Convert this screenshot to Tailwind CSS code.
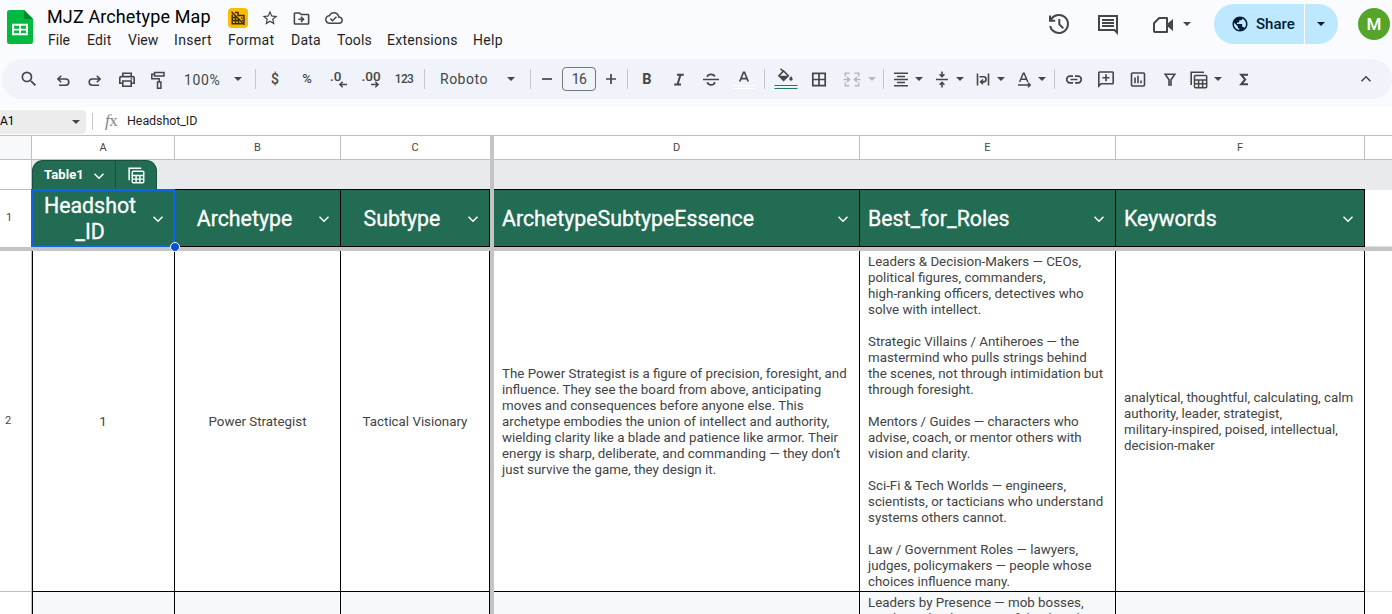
<!DOCTYPE html>
<html lang="en">
<head>
<meta charset="utf-8">
<title>MJZ Archetype Map</title>
<script src="https://cdn.jsdelivr.net/npm/@tailwindcss/browser@4"></script>
</head>
<body class="w-[1392px] h-[614px] overflow-hidden bg-white font-[Roboto,sans-serif] whitespace-nowrap">
<svg class="hidden">
  <symbol id="caret" viewBox="0 0 8 4"><path d="M0 0h8L4 4z"/></symbol>
  <symbol id="chev" viewBox="0 0 12 8"><path d="M1.500 1.700 6 6.200l4.500-4.500" fill="none" stroke="currentColor" stroke-width="1.500"/></symbol>
  <symbol id="tablecalc" viewBox="0 0 18 18"><path d="M1.200 14V1.200H14" fill="none" stroke="currentColor" stroke-width="1.600"/><path d="M4.500 5.500a1 1 0 0 1 1-1h10.200a1 1 0 0 1 1 1v10.200a1 1 0 0 1-1 1H5.500a1 1 0 0 1-1-1zM4.500 9h12.200M4.500 12.800h12.200M8.600 9v7.500M12.600 9v7.500" fill="none" stroke="currentColor" stroke-width="1.500"/></symbol>
</svg>
<div class="flex flex-col w-full h-full">
  <div class="bg-[#f9fbff] h-[107px] shrink-0">
    <header class="h-[59px] flex text-[#444746]">
      <svg class="w-[26px] h-[34px] ml-[7px] mt-[10px]" viewBox="0 0 26 34"><path d="M2.500 0H17l9 9v22.500a2.500 2.500 0 0 1-2.500 2.500h-21A2.500 2.500 0 0 1 0 31.500v-29A2.500 2.500 0 0 1 2.500 0z" fill="#00ba3f"/><path d="M17 0l9 9h-7.500A1.500 1.500 0 0 1 17 7.500z" fill="#008a2b"/><path d="M5 13.700h16v11.600H5zM7 15.700v3h5v-3zM14 15.700v3h5v-3zM7 20.500v2.800h5v-2.800zM14 20.500v2.800h5v-2.800z" fill="#fff" fill-rule="evenodd"/></svg>
      <div class="ml-[14px] flex flex-col">
        <div class="flex items-center h-[31px] pt-[5px]">
          <div class="w-[181px] text-[18px] leading-[24px] tracking-[0.12px] text-black pb-[3px]">MJZ Archetype Map</div>
          <div class="w-5 h-5 rounded bg-[#fbbc04] grid place-items-center"><svg class="w-4 h-4" viewBox="0 0 16 16" fill="none" stroke="#3c2e0a" stroke-width="1.500"><path d="M5 2.500h3v3h6v8M2.200 4.500v9.300h10.500M5.500 6v7.500M8.500 8.500v5M2.500 7.500h4M2.500 10.500h7M11 8.200h1.500M12 10.500h1"/><path d="M1.500 1.800l13 13"/></svg></div>
          <svg class="w-[18px] h-[18px] ml-[13px]" viewBox="0 0 24 24" fill="currentColor"><path d="M22 9.240l-7.190-.620L12 2 9.190 8.630 2 9.240l5.460 4.730L5.820 21 12 17.270 18.180 21l-1.630-7.030L22 9.240zM12 15.400l-3.760 2.270 1-4.280-3.320-2.880 4.380-.380L12 6.100l1.710 4.040 4.380.380-3.320 2.880 1 4.280L12 15.400z"/></svg>
          <svg class="w-[19px] h-[19px] ml-[13px]" viewBox="0 0 24 24" fill="currentColor"><path d="M20 6h-8l-2-2H4c-1.100 0-2 .9-2 2v12c0 1.100.9 2 2 2h16c1.100 0 2-.9 2-2V8c0-1.100-.9-2-2-2zm0 12H4V6h5.170l2 2H20v10zm-7.840-6H8v2h4.160l-1.590 1.590L11.990 17 16 13.010 11.990 9l-1.410 1.410L12.160 12z"/></svg>
          <svg class="w-[18px] h-[18px] ml-[14px]" viewBox="0 0 24 24" fill="currentColor"><path d="M19.350 10.040C18.670 6.590 15.640 4 12 4 9.110 4 6.600 5.640 5.350 8.040 2.340 8.360 0 10.910 0 14c0 3.310 2.690 6 6 6h13c2.760 0 5-2.240 5-5 0-2.640-2.050-4.780-4.650-4.960zM19 18H6c-2.210 0-4-1.790-4-4 0-2.050 1.530-3.760 3.560-3.970l1.070-.110.500-.950C8.080 7.140 9.940 6 12 6c2.620 0 4.880 1.860 5.390 4.430l.300 1.500 1.530.110c1.560.100 2.780 1.410 2.780 2.960 0 1.650-1.350 3-3 3zm-9-3.820l-2.090-2.090L6.500 13.500 10 17l6.010-6.010-1.410-1.410z"/></svg>
        </div>
        <nav class="flex h-[18px] items-center text-[14px] text-[#1f1f1f] pl-px">
          <span class="w-[39px]">File</span><span class="w-[41px] tracking-[0.2px]">Edit</span><span class="w-[46px]">View</span><span class="w-[54px] tracking-[0.35px]">Insert</span><span class="w-[63px] tracking-[0.25px]">Format</span><span class="w-[46px] tracking-[0.2px]">Data</span><span class="w-[50px] tracking-[0.1px]">Tools</span><span class="w-[86px] tracking-[0.25px]">Extensions</span><span class="tracking-[0.3px]">Help</span>
        </nav>
      </div>
      <div class="ml-auto flex h-[48px] items-center">
        <svg class="w-6 h-6 mr-[25px]" viewBox="0 0 24 24" fill="none" stroke="currentColor" stroke-width="2"><path d="M3 3.500v5.200h5.200M3.600 8.600A9 9 0 1 1 3.200 14M12.300 7v5.400l4 3.800"/></svg>
        <svg class="w-6 h-6 mr-[31px] mt-[2px]" viewBox="0 0 24 24" fill="none" stroke="currentColor" stroke-width="2"><path d="M3 3h18v16.500l-2.500-2.500H3z"/><path d="M18 17l4 4.500V17z" fill="currentColor" stroke="none"/><path d="M6 7h12M6 10h12M6 13h12"/></svg>
        <svg class="w-6 h-6 mt-[2px]" viewBox="0 0 24 24" fill="none" stroke="currentColor" stroke-width="2"><path d="M8.200 5H16v14H4a1 1 0 0 1-1-1v-7.800z" stroke-linejoin="round"/><path d="M16 11l6-5v12l-6-5z" fill="currentColor" stroke="none"/></svg>
        <svg class="w-[8px] h-[4px] ml-[8px] mr-[23px]" fill="#444746"><use href="#caret"/></svg>
        <div class="flex h-10 rounded-full bg-[#bde8ff] text-[#001d35] overflow-hidden w-[124px] mr-5">
          <div class="w-[91px] flex items-center pl-[17px] border-r border-white text-[15px] font-medium">
            <svg class="w-[18px] h-[18px] mr-[7px]" viewBox="0 0 24 24" fill="currentColor"><path d="M12 2C6.480 2 2 6.480 2 12s4.480 10 10 10 10-4.480 10-10S17.520 2 12 2zm-1 17.930c-3.950-.490-7-3.850-7-7.930 0-.620.080-1.210.210-1.790L9 15v1c0 1.100.9 2 2 2v1.930zm6.900-2.540c-.260-.810-1-1.390-1.900-1.390h-1v-3c0-.550-.450-1-1-1H8v-2h2c.550 0 1-.450 1-1V7h2c1.100 0 2-.9 2-2v-.410c2.930 1.190 5 4.060 5 7.410 0 2.080-.800 3.970-2.100 5.390z"/></svg>Share
          </div>
          <div class="flex-1 flex items-center pl-[12px]"><svg class="w-[8px] h-[4px]" fill="currentColor"><use href="#caret"/></svg></div>
        </div>
        <div class="w-8 h-8 rounded-full bg-[#54a529] text-white text-[17px] font-medium grid place-items-center mr-[2px] pt-px">M</div>
      </div>
    </header>

    <div class="ml-[2px] h-10 rounded-full bg-[#f0f3fa] flex items-center pl-[11px] text-[#444746] text-[14px]">
      <svg class="w-5 h-5 mx-[6px]" viewBox="0 0 24 24" fill="currentColor"><path d="M15.500 14h-.790l-.280-.270A6.471 6.471 0 0 0 16 9.500 6.500 6.500 0 1 0 9.500 16c1.610 0 3.090-.590 4.230-1.570l.270.280v.790l5 4.990L20.490 19l-4.990-5zm-6 0C7.010 14 5 11.990 5 9.500S7.010 5 9.500 5 14 7.010 14 9.500 11.990 14 9.500 14z"/></svg>
      <svg class="w-6 h-6 ml-[6px]" viewBox="0 0 24 24" fill="none" stroke="currentColor" stroke-width="1.600"><path d="M10.200 8.700 6.900 12l3.300 3.300M7 12h7.700a3.100 3.100 0 0 1 0 6.200H8"/></svg>
      <svg class="w-6 h-6 ml-2" viewBox="0 0 24 24" fill="none" stroke="currentColor" stroke-width="1.600"><path d="M13.800 8.700l3.300 3.300-3.300 3.300M17 12H9.300a3.100 3.100 0 0 0 0 6.200H16"/></svg>
      <svg class="w-6 h-6 ml-2" viewBox="0 0 24 24" fill="none" stroke="currentColor" stroke-width="1.600"><path d="M7.800 9.500V6.200h8.400v3.300M7.500 16.200H4.800v-5.200a1.400 1.400 0 0 1 1.400-1.400h11.600a1.400 1.400 0 0 1 1.400 1.400v5.200h-2.700M7.800 14h8.400v5.200H7.800z"/><path d="M15.600 11.200h1.600v1.500h-1.600z" fill="currentColor" stroke="none"/></svg>
      <svg class="w-6 h-6 ml-[7px]" viewBox="0 0 24 24" fill="none" stroke="currentColor" stroke-width="1.500"><path d="M8.500 5.500H18V9H8.500zM8.500 7.200H5.800v4.600h7.400V15M11.500 15h3.400v6.200h-3.400z"/></svg>
      <span class="ml-[14px] w-[42px] tracking-[0.6px] pt-[2px]">100%</span>
      <svg class="w-2 h-1 mx-2" fill="currentColor"><use href="#caret"/></svg>
      <i class="w-px h-5 bg-[#c7c7c7] ml-[5px]"></i>
      <span class="ml-[3px] w-8 text-center font-medium">$</span>
      <span class="w-8 text-center text-[13px] font-medium">%</span>
      <span class="w-8 flex justify-center"><svg class="w-6 h-6" viewBox="0 0 24 24"><text x="3" y="13.500" class="text-[13.500px] font-medium" fill="currentColor">.0</text><path d="M20 17.500h-7M15.700 14.700 12.900 17.500l2.800 2.800" fill="none" stroke="currentColor" stroke-width="1.500"/></svg></span>
      <span class="w-8 flex justify-center"><svg class="w-6 h-6" viewBox="0 0 24 24"><text x="2.500" y="13.500" class="text-[13.500px] font-medium" fill="currentColor">.00</text><path d="M12 17.500h7M16.300 14.700l2.800 2.800-2.800 2.800" fill="none" stroke="currentColor" stroke-width="1.500"/></svg></span>
      <span class="w-[34px] text-center text-[12px] font-medium tracking-[-0.6px] pb-px">123</span>
      <i class="w-px h-5 bg-[#c7c7c7] ml-[3px]"></i>
      <span class="ml-[15px] w-[59px] tracking-[0.5px] pt-px">Roboto</span>
      <svg class="w-2 h-1 mx-2" fill="currentColor"><use href="#caret"/></svg>
      <i class="w-px h-5 bg-[#c7c7c7] ml-[7px]"></i>
      <svg class="w-6 h-6 ml-[4px]" viewBox="0 0 24 24"><path d="M7 12h10" stroke="currentColor" stroke-width="1.700"/></svg>
      <span class="ml-[3px] w-[34px] h-6 border border-[#747775] rounded text-center leading-[23px] tracking-[-0.5px]">16</span>
      <svg class="w-6 h-6 ml-[3px]" viewBox="0 0 24 24"><path d="M7 12h10M12 7v10" stroke="currentColor" stroke-width="1.700"/></svg>
      <i class="w-px h-5 bg-[#c7c7c7] ml-[4px]"></i>
      <span class="ml-[3px] w-8 text-center font-bold text-[14.500px] pt-[2px]">B</span>
      <svg class="w-6 h-6 mx-1" viewBox="0 0 24 24" fill="none" stroke="currentColor" stroke-width="2"><path d="M10 7.700h6.800M7.200 17.500h6.800M13.500 7.700 10.500 17.500"/></svg>
      <svg class="w-6 h-6 mx-1" viewBox="0 0 24 24" fill="none" stroke="currentColor" stroke-width="1.700"><path d="M4 12.500h16M8.300 10C8.300 8.100 10 7.300 12 7.300s3.300.8 3.700 2.200M8.300 15.300c.4 1.700 1.900 2.500 3.700 2.500s3.600-.8 3.600-2.900"/></svg>
      <svg class="w-6 h-6 ml-[5px] mr-1" viewBox="0 0 24 24"><path d="M7.800 14.500 11.500 5.300h1l3.700 9.200M9.300 11.600h5.400" fill="none" stroke="currentColor" stroke-width="1.700"/><path d="M.5 18.500h23M.5 21.500h23" stroke="#fff" stroke-width="1.200"/></svg>
      <i class="w-px h-5 bg-[#c7c7c7] ml-[4px]"></i>
      <svg class="w-6 h-6 ml-[9px] mr-[7px]" viewBox="0 0 24 24"><path d="M6.500 1.700l2.600 2.600M9.600 4l4.700 4.700-4.700 4.700-4.700-4.700z" fill="none" stroke="currentColor" stroke-width="1.600"/><path d="M4.800 8.700h9.600l-4.800 4.800z" fill="currentColor"/><path d="M17 9.300c1 1.200 1.700 2 1.700 2.800a1.700 1.700 0 0 1-3.400 0c0-.8.700-1.600 1.700-2.800z" fill="currentColor"/><path d="M.5 18.500h23M.5 21.500h23" stroke="#1f7a58" stroke-width="1.100"/></svg>
      <svg class="w-6 h-6 ml-[2px]" viewBox="0 0 24 24" fill="none" stroke="currentColor" stroke-width="1.700"><path d="M5.800 6.300h12.400v12.400H5.800zM12 6.500v12M6 12.500h12"/></svg>
      <svg class="w-6 h-6 ml-[9px] mr-[3px] text-[#b7b9bc]" viewBox="0 0 24 24" fill="none" stroke="currentColor" stroke-width="1.600"><path d="M9.500 6.300H5.300V9.500M14.500 6.300h4.200V9.500M9.500 18.700H5.300V15.500M14.500 18.700h4.200V15.500M3.500 12.500H9M7 10 9.500 12.500 7 15M20.500 12.500H15M17 10 14.500 12.500l2.500 2.500"/></svg>
      <svg class="w-2 h-1 mx-px" fill="#b7b9bc"><use href="#caret"/></svg>
      <i class="w-px h-5 bg-[#c7c7c7] ml-[6px]"></i>
      <svg class="w-6 h-6 ml-[5px]" viewBox="0 0 24 24" fill="none" stroke="currentColor" stroke-width="1.500"><path d="M5 6.300h14M8 9.400h8M5 12.500h14M8 15.600h8M5 18.700h14"/></svg>
      <svg class="w-2 h-1 ml-[2px] mr-px" fill="currentColor"><use href="#caret"/></svg>
      <svg class="w-6 h-6 ml-[6px]" viewBox="0 0 24 24" fill="none" stroke="currentColor" stroke-width="1.600"><path d="M6 12.500h12M12 4.500v5M12 20.500v-5M9.600 7.300 12 9.700l2.400-2.400M9.600 17.700 12 15.300l2.400 2.400"/></svg>
      <svg class="w-2 h-1 ml-[2px] mr-px" fill="currentColor"><use href="#caret"/></svg>
      <svg class="w-6 h-6 ml-[6px]" viewBox="0 0 24 24" fill="none" stroke="currentColor" stroke-width="1.600"><path d="M6.500 6.500v12M17.500 6.500v12M8.500 9.700h4a2.500 2.500 0 0 1 0 5.200H10M12 12.500l-2.400 2.400 2.400 2.400"/></svg>
      <svg class="w-2 h-1 ml-[2px] mr-px" fill="currentColor"><use href="#caret"/></svg>
      <svg class="w-6 h-6 ml-[7px]" viewBox="0 0 24 24" fill="none" stroke="currentColor" stroke-width="1.500"><path d="M6.600 15 10.300 6.200h.8l3.700 8.800M8 12.200h5.400M5 18h12M15 15.800l2.200 2.200-2.200 2.200"/></svg>
      <svg class="w-2 h-1 mx-px" fill="currentColor"><use href="#caret"/></svg>
      <i class="w-px h-5 bg-[#c7c7c7] ml-[7px]"></i>
      <svg class="w-6 h-6 ml-[7px]" viewBox="0 0 24 24" fill="none" stroke="currentColor" stroke-width="1.700"><path d="M11 9.200H8a3.300 3.300 0 0 0 0 6.600h3M13 9.200h3a3.300 3.300 0 0 1 0 6.600h-3M8.500 12.500h7"/></svg>
      <svg class="w-6 h-6 ml-2" viewBox="0 0 24 24" fill="none" stroke="currentColor" stroke-width="1.600"><path d="M4.800 19V5.800a.8.800 0 0 1 .8-.8h12.800a.8.800 0 0 1 .8.800v10.200a.8.800 0 0 1-.8.800H7zM12 7.300v7M8.500 10.800h7"/></svg>
      <svg class="w-6 h-6 ml-2" viewBox="0 0 24 24" fill="none" stroke="currentColor" stroke-width="1.600"><rect x="5.500" y="6" width="13" height="13" rx="1"/><path d="M9 10.500v5.800M12 8.700v7.600M15 13.500v2.800"/></svg>
      <svg class="w-6 h-6 ml-2" viewBox="0 0 24 24" fill="none" stroke="currentColor" stroke-width="1.600"><path d="M7.200 7.300h9.600L13 12.700v5.300h-2v-5.300z"/></svg>
      <svg class="w-[18px] h-[18px] ml-[8px] mt-px"><use href="#tablecalc"/></svg>
      <svg class="w-2 h-1 ml-[6px] mr-px" fill="currentColor"><use href="#caret"/></svg>
      <svg class="w-6 h-6 ml-[9px]" viewBox="0 0 24 24" fill="none" stroke="currentColor" stroke-width="2"><path d="M16 7.700H9.200l4 4.800-4 4.800H16"/></svg>
      <svg class="w-[12px] h-[8px] ml-auto mr-[20px] rotate-180"><use href="#chev"/></svg>
    </div>
  </div>

  <div class="h-[29px] shrink-0 flex items-center border-b border-[#c0c0c0] text-[12px] text-[#1f1f1f]">
    <div class="w-[86px] h-6 bg-[#ececec] rounded-r-[4px] flex items-center text-black mt-px"><span class="w-[72px] pb-[2px]">A1</span><svg class="w-2 h-1" fill="#444746"><use href="#caret"/></svg></div>
    <i class="w-px h-[17px] bg-[#c7c7c7] ml-[6px]"></i>
    <span class="ml-[12px] w-[22px] font-[Liberation_Serif,serif] text-[17px] leading-4 text-[#80868b] tracking-[-0.5px]"><em>f</em>x</span>
    <span class="text-[12.500px] tracking-[-0.08px]">Headshot_ID</span>
  </div>

  <div class="relative flex-1 flex flex-col">
    <div class="h-6 shrink-0 flex border-b border-[#c0c0c0] text-[11px] text-[#444746] text-center leading-[23px]">
      <div class="w-8 bg-[#f8f9fa] border-r border-[#c0c0c0]"></div>
      <div class="w-[143px] border-r border-[#c0c0c0]">A</div>
      <div class="w-[166px] border-r border-[#c0c0c0]">B</div>
      <div class="w-[149px] pr-px">C</div>
      <div class="w-1 bg-[#c4c4c4] h-6"></div>
      <div class="w-[366px] border-r border-[#c0c0c0]">D</div>
      <div class="w-[256px] border-r border-[#c0c0c0]">E</div>
      <div class="w-[249px] border-r border-[#c0c0c0]">F</div>
    </div>
    <div class="h-[30px] shrink-0 flex bg-[#e8eaed]">
      <div class="w-8 bg-white border-r border-b border-[#c0c0c0]"></div>
      <div class="w-[125px] bg-[#226c54] border border-b-0 border-[#18513e] rounded-t-[11px] flex text-white text-[13px] font-bold">
        <div class="w-[83px] flex items-center pl-[11px] pb-[2px] border-r border-[#18513e]"><span class="w-[49px] tracking-[0.1px]">Table1</span><svg class="w-[12px] h-[8px] mt-[3px]"><use href="#chev"/></svg></div>
        <svg class="w-[17px] h-[17px] ml-[12px] mt-[6px]"><use href="#tablecalc"/></svg>
      </div>
      <div class="w-[333px] border-b border-black"></div>
      <div class="w-1 bg-[#c4c4c4]"></div>
      <div class="w-[871px] border-b border-black"></div>
    </div>
    <div class="h-[57px] shrink-0 flex text-white text-[21.330px] leading-[26px] [-webkit-text-stroke:0.3px_white]">
      <div class="w-8 border-r border-[#c0c0c0] text-[11px] text-[#444746] pl-[6px] leading-[56px] [-webkit-text-stroke:0]">1</div>
      <div class="relative w-[143px] bg-[#226c54] border-r border-b border-black flex items-center justify-center text-center pr-[26px] pt-[2px]">Headshot<br>_ID
        <svg class="absolute right-[10px] top-[25px] w-3 h-2"><use href="#chev"/></svg>
        <div class="absolute -left-px -top-px w-[144px] h-[58px] border-2 border-[#0f62ea]"></div>
        <div class="absolute z-10 left-[138px] top-[52px] w-[10px] h-[10px] rounded-full bg-[#0b4fd8] border border-white"></div>
      </div>
      <div class="relative w-[166px] bg-[#226c54] border-r border-b border-black flex items-center justify-center pr-[26px] pt-[2px]">Archetype<svg class="absolute right-[10px] top-[25px] w-3 h-2"><use href="#chev"/></svg></div>
      <div class="relative w-[149px] bg-[#226c54] border-r border-b border-black flex items-center justify-center pr-[26px] pt-[2px]">Subtype<svg class="absolute right-[10px] top-[25px] w-3 h-2"><use href="#chev"/></svg></div>
      <div class="w-1 bg-[#c4c4c4]"></div>
      <div class="relative w-[366px] bg-[#226c54] border-r border-b border-black flex items-center pl-2 pt-[2px]">ArchetypeSubtypeEssence<svg class="absolute right-[10px] top-[25px] w-3 h-2"><use href="#chev"/></svg></div>
      <div class="relative w-[256px] bg-[#226c54] border-r border-b border-black flex items-center pl-2 pt-[2px]">Best_for_Roles<svg class="absolute right-[10px] top-[25px] w-3 h-2"><use href="#chev"/></svg></div>
      <div class="relative w-[249px] bg-[#226c54] border-r border-b border-black flex items-center pl-2 pt-[2px]">Keywords<svg class="absolute right-[10px] top-[25px] w-3 h-2"><use href="#chev"/></svg></div>
      <div class="flex-1 border-b border-[#e0e0e0]"></div>
    </div>
    <div class="h-1 shrink-0 bg-[#c4c4c4]"></div>
    <div class="h-[341px] shrink-0 flex items-stretch text-[#434343] text-[13.330px] leading-4">
      <div class="w-8 border-r border-b border-[#c0c0c0] text-[11px] text-[#444746] pl-[5px] leading-[339px]">2</div>
      <div class="w-[143px] border-x border-b border-black flex items-center justify-center pt-[2px] pr-px">1</div>
      <div class="w-[166px] border-r border-b border-black flex items-center justify-center pt-[2px]">Power Strategist</div>
      <div class="w-[149px] border-r border-b border-black flex items-center justify-center pt-[2px]">Tactical Visionary</div>
      <div class="w-1 bg-[#c4c4c4]"></div>
      <div class="w-[366px] border-r border-b border-black flex items-center pl-2 pt-[2px]">The Power Strategist is a figure of precision, foresight, and<br>influence. They see the board from above, anticipating<br>moves and consequences before anyone else. This<br>archetype embodies the union of intellect and authority,<br>wielding clarity like a blade and patience like armor. Their<br>energy is sharp, deliberate, and commanding — they don’t<br>just survive the game, they design it.</div>
      <div class="w-[256px] border-r border-b border-black flex items-center pl-2 pt-[2px]">Leaders &amp; Decision-Makers — CEOs,<br>political figures, commanders,<br>high-ranking officers, detectives who<br>solve with intellect.<br><br>Strategic Villains / Antiheroes — the<br>mastermind who pulls strings behind<br>the scenes, not through intimidation but<br>through foresight.<br><br>Mentors / Guides — characters who<br>advise, coach, or mentor others with<br>vision and clarity.<br><br>Sci-Fi &amp; Tech Worlds — engineers,<br>scientists, or tacticians who understand<br>systems others cannot.<br><br>Law / Government Roles — lawyers,<br>judges, policymakers — people whose<br>choices influence many.</div>
      <div class="w-[249px] border-r border-b border-black flex items-center pl-2 pt-[2px]">analytical, thoughtful, calculating, calm<br>authority, leader, strategist,<br>military-inspired, poised, intellectual,<br>decision-maker</div>
      <div class="flex-1 border-b border-[#e0e0e0]"></div>
    </div>
    <div class="h-[22px] overflow-hidden flex text-[#434343] text-[13.330px] leading-4">
      <div class="w-8 border-r border-[#c0c0c0]"></div>
      <div class="w-[143px] border-x border-black bg-[#f6f8f9]"></div>
      <div class="w-[166px] border-r border-black bg-[#f6f8f9]"></div>
      <div class="w-[149px] border-r border-black bg-[#f6f8f9]"></div>
      <div class="w-1 bg-[#c4c4c4]"></div>
      <div class="w-[366px] border-r border-black bg-[#f6f8f9]"></div>
      <div class="w-[256px] border-r border-black bg-[#f6f8f9] pl-2 pt-[3px]">Leaders by Presence — mob bosses,<br>syndicate leaders, powerful political</div>
      <div class="w-[249px] border-r border-black bg-[#f6f8f9]"></div>
    </div>
  </div>
</div>
</body>
</html>
